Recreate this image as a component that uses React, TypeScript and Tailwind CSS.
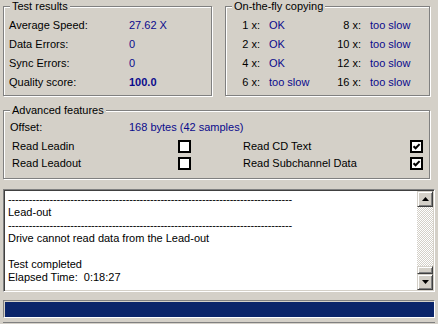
import type { ReactNode } from 'react';

const VALUE = 'text-[#0a0a8c]';

function Group({ title, className, children }: { title: string; className: string; children: ReactNode }) {
  return (
    <div
      className={`relative border border-[#808080] shadow-[1px_1px_0_#fff,inset_1px_1px_0_#fff] ${className}`}
    >
      <span className="absolute -top-[7px] left-[6px] bg-[#d4d0c8] px-[2px] leading-[13px]">{title}</span>
      {children}
    </div>
  );
}

function CheckBox({ checked }: { checked?: boolean }) {
  return (
    <div className="flex h-[13px] w-[13px] items-center justify-center border-2 border-black bg-white">
      {checked && (
        <svg width="9" height="9" viewBox="0 0 9 9">
          <path d="M1.5 4.2 L3.6 6.3 L7.6 2.1" fill="none" stroke="#000" strokeWidth="2" />
        </svg>
      )}
    </div>
  );
}

function ScrollButton({ up }: { up?: boolean }) {
  return (
    <div className="flex h-[16px] w-[16px] items-center justify-center border border-t-[#d4d0c8] border-l-[#d4d0c8] border-r-[#404040] border-b-[#404040] bg-[#d4d0c8] shadow-[inset_1px_1px_0_#fff,inset_-1px_-1px_0_#808080]">
      <svg width="7" height="4" viewBox="0 0 7 4">
        <polygon points={up ? '3.5,0 7,4 0,4' : '0,0 7,0 3.5,4'} fill="#000" />
      </svg>
    </div>
  );
}

const dashes = '-'.repeat(82);

const copying: [string, string, string, string][] = [
  ['1 x:', 'OK', '8 x:', 'too slow'],
  ['2 x:', 'OK', '10 x:', 'too slow'],
  ['4 x:', 'OK', '12 x:', 'too slow'],
  ['6 x:', 'too slow', '16 x:', 'too slow'],
];

export default function App() {
  return (
    <div className="h-[324px] w-[438px] overflow-hidden bg-[#d4d0c8] font-['Liberation_Sans',Arial,sans-serif] text-[11px] text-black">
      <div className="flex flex-col pl-[3px] pt-[6px]">
        <div className="flex gap-[13px]">
          <Group title="Test results" className="h-[90px] w-[209px]">
            <div className="grid grid-cols-[125px_1fr] pt-[9px] leading-[19px]">
              <span className="pl-[5px]">Average Speed:</span>
              <span className={VALUE}>27.62 X</span>
              <span className="pl-[5px]">Data Errors:</span>
              <span className={VALUE}>0</span>
              <span className="pl-[5px]">Sync Errors:</span>
              <span className={VALUE}>0</span>
              <span className="pl-[5px]">Quality score:</span>
              <span className={`${VALUE} font-bold`}>100.0</span>
            </div>
          </Group>
          <Group title="On-the-fly copying" className="h-[90px] w-[205px]">
            <div className="grid grid-cols-[34px_69px_32px_1fr] pt-[9px] leading-[19px]">
              {copying.map(([a, b, c, d]) => (
                <div key={a} className="contents">
                  <span className="text-right">{a}</span>
                  <span className={`pl-[9px] ${VALUE}`}>{b}</span>
                  <span className="text-right">{c}</span>
                  <span className={`pl-[9px] ${VALUE}`}>{d}</span>
                </div>
              ))}
            </div>
          </Group>
        </div>

        <Group title="Advanced features" className="mt-[14px] h-[69px] w-[427px]">
          <div className="flex flex-col pt-[8px]">
            <div className="grid grid-cols-[125px_1fr] leading-[17px]">
              <span className="pl-[6px]">Offset:</span>
              <span className={VALUE}>168 bytes (42 samples)</span>
            </div>
            <div className="mt-[2px] grid grid-cols-[174px_13px_52px_167px_13px] items-center leading-[17px]">
              <span className="pl-[8px]">Read Leadin</span>
              <CheckBox />
              <span />
              <span>Read CD Text</span>
              <CheckBox checked />
              <span className="pl-[8px]">Read Leadout</span>
              <CheckBox />
              <span />
              <span>Read Subchannel Data</span>
              <CheckBox checked />
            </div>
          </div>
        </Group>

        <div className="mt-[10px] flex h-[103px] w-[432px] border border-t-[#808080] border-l-[#808080] border-r-white border-b-white bg-white p-[1px] shadow-[inset_1px_1px_0_#404040,inset_-1px_-1px_0_#d4d0c8]">
          <div className="flex-1 overflow-hidden whitespace-pre pl-[3px] pt-[2px] leading-[13px]">
            <div className="tracking-[-0.2px]">{dashes}</div>
            <div>Lead-out</div>
            <div className="tracking-[-0.2px]">{dashes}</div>
            <div>Drive cannot read data from the Lead-out</div>
            <div>&nbsp;</div>
            <div>Test completed</div>
            <div>Elapsed Time:  0:18:27</div>
          </div>
          <div className="flex w-[16px] flex-col">
            <ScrollButton up />
            <div className="flex-1 bg-[repeating-conic-gradient(#d4d0c8_0_25%,#fff_0_50%)] bg-[length:2px_2px]" />
            <div className="h-[8px] border border-t-[#d4d0c8] border-l-[#d4d0c8] border-r-[#404040] border-b-[#404040] bg-[#d4d0c8] shadow-[inset_1px_1px_0_#fff,inset_-1px_-1px_0_#808080]" />
            <ScrollButton />
          </div>
        </div>

        <div className="mt-[8px] h-[18px] w-[432px] border border-t-[#808080] border-l-[#808080] border-r-white border-b-white pl-[1px] pt-[1px]">
          <div className="h-[15px] w-full bg-[#0a246a]" />
        </div>

        <div className="mt-[4px] w-[432px] border-t border-[#808080]" />
      </div>
    </div>
  );
}
